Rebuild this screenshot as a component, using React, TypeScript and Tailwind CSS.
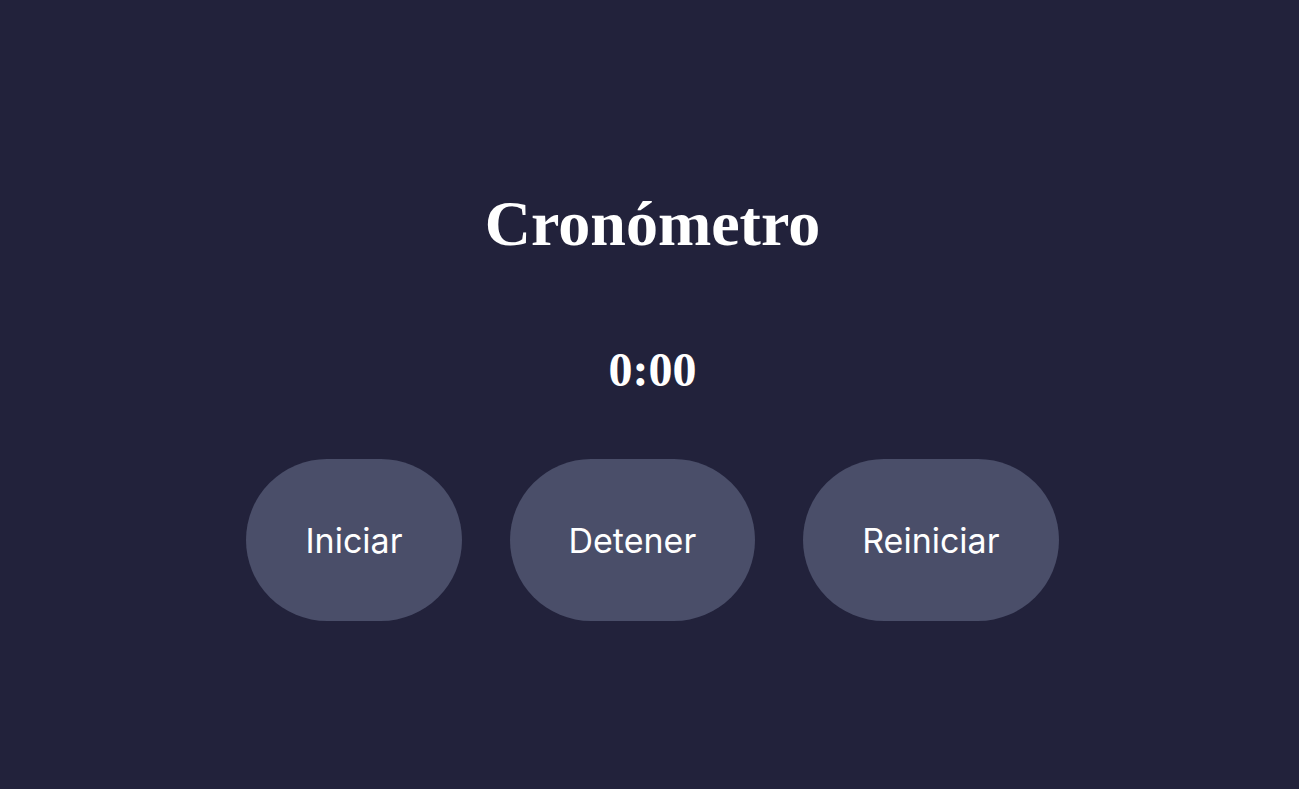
import { useEffect, useRef, useState } from 'react';

function formatTime(seconds: number) {
  const m = Math.floor(seconds / 60);
  const s = seconds % 60;
  return `${m}:${s.toString().padStart(2, '0')}`;
}

export default function App() {
  const [seconds, setSeconds] = useState(0);
  const [running, setRunning] = useState(false);
  const timer = useRef<number | null>(null);

  useEffect(() => {
    if (!running) return;
    timer.current = window.setInterval(() => setSeconds((s) => s + 1), 1000);
    return () => {
      if (timer.current) window.clearInterval(timer.current);
    };
  }, [running]);

  const buttons = [
    { label: 'Iniciar', onClick: () => setRunning(true) },
    { label: 'Detener', onClick: () => setRunning(false) },
    {
      label: 'Reiniciar',
      onClick: () => {
        setRunning(false);
        setSeconds(0);
      },
    },
  ];

  return (
    <div className="min-h-screen bg-[#22223b] text-white flex flex-col items-center pt-[188px] pl-[6px]">
      <h1 className="font-['Liberation_Serif',serif] font-bold text-[64px] leading-[71px]">
        Cronómetro
      </h1>

      <div className="mt-[84px] font-['Liberation_Serif',serif] font-bold text-[48px] leading-[53px]">
        {formatTime(seconds)}
      </div>

      <div className="mt-[63px] flex gap-[48px]">
        {buttons.map((b) => (
          <button
            key={b.label}
            onClick={b.onClick}
            className="h-[162px] px-[59px] rounded-full bg-[#4a4e69] text-white font-['Inter',sans-serif] text-[34px]"
          >
            {b.label}
          </button>
        ))}
      </div>
    </div>
  );
}
